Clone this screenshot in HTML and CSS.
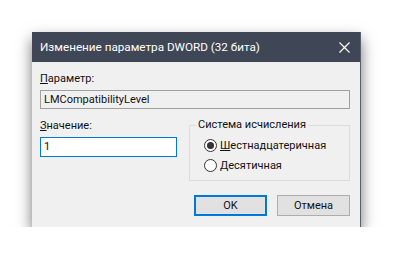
FILE: index.html
```html
<!DOCTYPE html>
<html lang="ru">
<head>
  <meta charset="UTF-8" />
  <title>Изменение параметра DWORD (32 бита)</title>
  <link rel="stylesheet" href="styles.css">
</head>
<body>

<div class="dialog">
  <div class="titlebar">
    <span class="title">Изменение параметра DWORD (32 бита)</span>
    <svg class="close" width="11" height="11" viewBox="0 0 11 11">
      <path d="M0.5 0.5 L10.5 10.5 M10.5 0.5 L0.5 10.5" stroke="#fff" stroke-width="1.2" fill="none"/>
    </svg>
  </div>

  <div class="content">
    <div class="label"><u>П</u>араметр:</div>
    <div class="field readonly">LMCompatibilityLevel</div>

    <div class="row">
      <div class="value-col">
        <div class="label"><u>З</u>начение:</div>
        <div class="field active">1</div>
      </div>
      <fieldset class="group">
        <legend>Система исчисления</legend>
        <div class="radio">
          <span class="dot checked"></span><span><u>Ш</u>естнадцатеричная</span>
        </div>
        <div class="radio">
          <span class="dot"></span><span><u>Д</u>есятичная</span>
        </div>
      </fieldset>
    </div>

    <div class="buttons">
      <div class="btn default">OK</div>
      <div class="btn">Отмена</div>
    </div>
  </div>
</div>

</body>
</html>
```

FILE: styles.css
```css
body {
  margin: 0;
  background: #fff;
  font-family: Roboto, 'Noto Sans', sans-serif;
  font-size: 11px;
  color: #111;
}

.dialog {
  width: 328px;
  height: 195px;
  margin: 32px 0 0 32px;
  background: #f0f0f0;
  border-right: 1px solid #5a6070;
  box-shadow: 0 7px 14px rgba(0, 0, 0, 0.55);
  display: flex;
  flex-direction: column;
}

.titlebar {
  height: 30px;
  background: #3f4656;
  color: #fff;
  display: flex;
  align-items: center;
  justify-content: space-between;
  padding: 0 10px 0 8px;
}

.title {
  font-size: 11.7px;
}

.close {
  display: block;
}

.content {
  padding: 9px 10px 0 8px;
}

.label {
  height: 16px;
  line-height: 16px;
}

.field {
  height: 17px;
  line-height: 17px;
  padding: 0 3px;
  border: 1px solid #a0a0a0;
  background: #f0f0f0;
  margin-top: 3px;
}

.field.active {
  width: 129px;
  height: 18px;
  line-height: 18px;
  background: #fff;
  border-color: #0078d7;
}

.row {
  display: flex;
  justify-content: space-between;
  margin-top: 9px;
}

.group {
  width: 161px;
  height: 63px;
  margin: 0;
  padding: 3px 0 0 14px;
  border: 1px solid #dcdcdc;
  box-sizing: border-box;
}

.group legend {
  padding: 0 2px;
  margin-left: -8px;
  line-height: 14px;
}

.radio {
  display: flex;
  align-items: center;
  gap: 3px;
  height: 20px;
}

.dot {
  width: 11px;
  height: 11px;
  border: 1px solid #333;
  border-radius: 50%;
  background: #fff;
  display: flex;
  align-items: center;
  justify-content: center;
}

.dot.checked::after {
  content: "";
  width: 7px;
  height: 7px;
  border-radius: 50%;
  background: #333;
}

.buttons {
  display: flex;
  justify-content: flex-end;
  gap: 10px;
  margin-top: 14px;
}

.btn {
  width: 71px;
  height: 19px;
  line-height: 19px;
  text-align: center;
  background: #e1e1e1;
  border: 1px solid #adadad;
}

.btn.default {
  border: 2px solid #0078d7;
  width: 69px;
  height: 17px;
  line-height: 17px;
}
```
